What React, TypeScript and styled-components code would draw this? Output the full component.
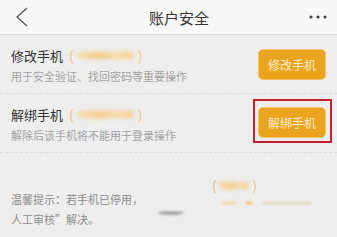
import React from 'react';
import styled, {createGlobalStyle} from 'styled-components';

const GlobalStyle = createGlobalStyle`
  html, body {
    margin: 0;
    padding: 0;
    background: #eeeeee;
  }
  body {
    font-family: "Noto Sans CJK SC", "Noto Sans", sans-serif;
  }
`;

const Page = styled.div`
  width: 337px;
  height: 237px;
  overflow: hidden;
  background: #eeeeee;
  display: flex;
  flex-direction: column;
`;

const Header = styled.div`
  height: 34px;
  background: #f8f8f8;
  border-bottom: 1px solid #dedede;
  display: flex;
  align-items: center;
  justify-content: space-between;
  padding: 0 9px 0 12px;
  box-sizing: content-box;
`;

const Title = styled.div`
  font-size: 15px;
  color: #333;
  margin-left: 18px;
`;

const IconBtn = styled.div`
  width: 20px;
  height: 34px;
  display: flex;
  align-items: center;
  justify-content: center;
`;

const Row = styled.div`
  height: 58px;
  display: flex;
  align-items: center;
  justify-content: space-between;
  padding: 0 11px;
  border-bottom: 1px dashed #dcdcdc;
`;

const Info = styled.div`
  display: flex;
  flex-direction: column;
  gap: 7px;
  margin-top: 2px;
`;

const Name = styled.div`
  font-size: 13px;
  color: #333;
  line-height: 15px;
  display: flex;
  align-items: center;
`;

const Paren = styled.span<{$lead?: boolean}>`
  color: #f3c47a;
  font-size: 14px;
  line-height: 15px;
  margin: 0 1px 0 ${p => (p.$lead ? 6 : 1)}px;
`;

const Blur = styled.span<{$w: number}>`
  display: inline-block;
  width: ${p => p.$w}px;
  height: 7px;
  border-radius: 4px;
  background: linear-gradient(90deg, #f9dcaa, #f5c985 40%, #f8d9a6 70%, #f5cb8c);
  filter: blur(2px);
  margin: 0 3px;
`;

const Desc = styled.div`
  font-size: 11px;
  color: #a3a3a3;
  line-height: 13px;
`;

const ActionButton = styled.button`
  width: 68px;
  height: 31px;
  border-radius: 5px;
  border: 1px solid #f4c46e;
  background: #eba41e;
  color: #fdeccb;
  font-family: inherit;
  font-size: 12px;
  padding: 0;
  box-sizing: border-box;
`;

const Highlight = styled.div`
  border: 2px solid #c4222e;
  padding: 6px 4px 3px 3px;
  margin-right: -6px;
  margin-bottom: 5px;
  display: flex;
`;

const Footer = styled.div`
  flex: 1;
  display: flex;
  padding: 0 11px;
`;

const Tip = styled.div`
  font-size: 11px;
  color: #8d8d8d;
  line-height: 20px;
  margin-top: 36px;
  width: 140px;
`;

const Swoosh = styled.div`
  width: 26px;
  height: 4px;
  margin: 58px 0 0 7px;
  border-radius: 50%;
  background: #a6a6a6;
  filter: blur(0.8px);
`;

const Smudge = styled.div`
  display: flex;
  flex-direction: column;
  margin: 23px 0 0 28px;
  gap: 6px;
`;

const Bracket = styled.div`
  display: flex;
  align-items: center;
  color: #eab56a;
  font-size: 13px;
  filter: blur(0.4px);
`;

const Dots = styled.div`
  display: flex;
  align-items: center;
  gap: 10px;
  margin-left: 10px;
`;

const Dot = styled.span<{$c: string; $w: number}>`
  width: ${p => p.$w}px;
  height: 4px;
  border-radius: 2px;
  background: ${p => p.$c};
  filter: blur(1px);
`;

const BackIcon = () => (
  <svg width="14" height="22" viewBox="0 0 14 22">
    <path d="M12 2 L2 11 L12 20" fill="none" stroke="#555" strokeWidth="1.3" />
  </svg>
);

const MoreIcon = () => (
  <svg width="20" height="6" viewBox="0 0 20 6">
    <circle cx="3" cy="3" r="1.6" fill="#444" />
    <circle cx="10" cy="3" r="1.6" fill="#444" />
    <circle cx="17" cy="3" r="1.6" fill="#444" />
  </svg>
);

// phone number is blurred out in the screenshot
const Masked = () => (
  <>
    <Paren $lead>(</Paren>
    <Blur $w={56} />
    <Paren>)</Paren>
  </>
);

const App: React.FC = () => {
  return (
    <Page>
      <GlobalStyle />
      <Header>
        <IconBtn><BackIcon /></IconBtn>
        <Title>账户安全</Title>
        <IconBtn><MoreIcon /></IconBtn>
      </Header>
      <Row>
        <Info>
          <Name>修改手机<Masked /></Name>
          <Desc>用于安全验证、找回密码等重要操作</Desc>
        </Info>
        <ActionButton>修改手机</ActionButton>
      </Row>
      <Row>
        <Info>
          <Name>解绑手机<Masked /></Name>
          <Desc>解除后该手机将不能用于登录操作</Desc>
        </Info>
        <Highlight>
          <ActionButton>解绑手机</ActionButton>
        </Highlight>
      </Row>
      <Footer>
        <Tip>
          温馨提示：若手机已停用，
          <br />
          人工审核”解决。
        </Tip>
        <Swoosh />
        <Smudge>
          <Bracket>(<Blur $w={30} />)</Bracket>
          <Dots>
            <Dot $c="#f0d9b5" $w={14} />
            <Dot $c="#f3c47c" $w={6} />
            <Dot $c="#e6ddd0" $w={50} />
          </Dots>
        </Smudge>
      </Footer>
    </Page>
  );
};

export default App;
